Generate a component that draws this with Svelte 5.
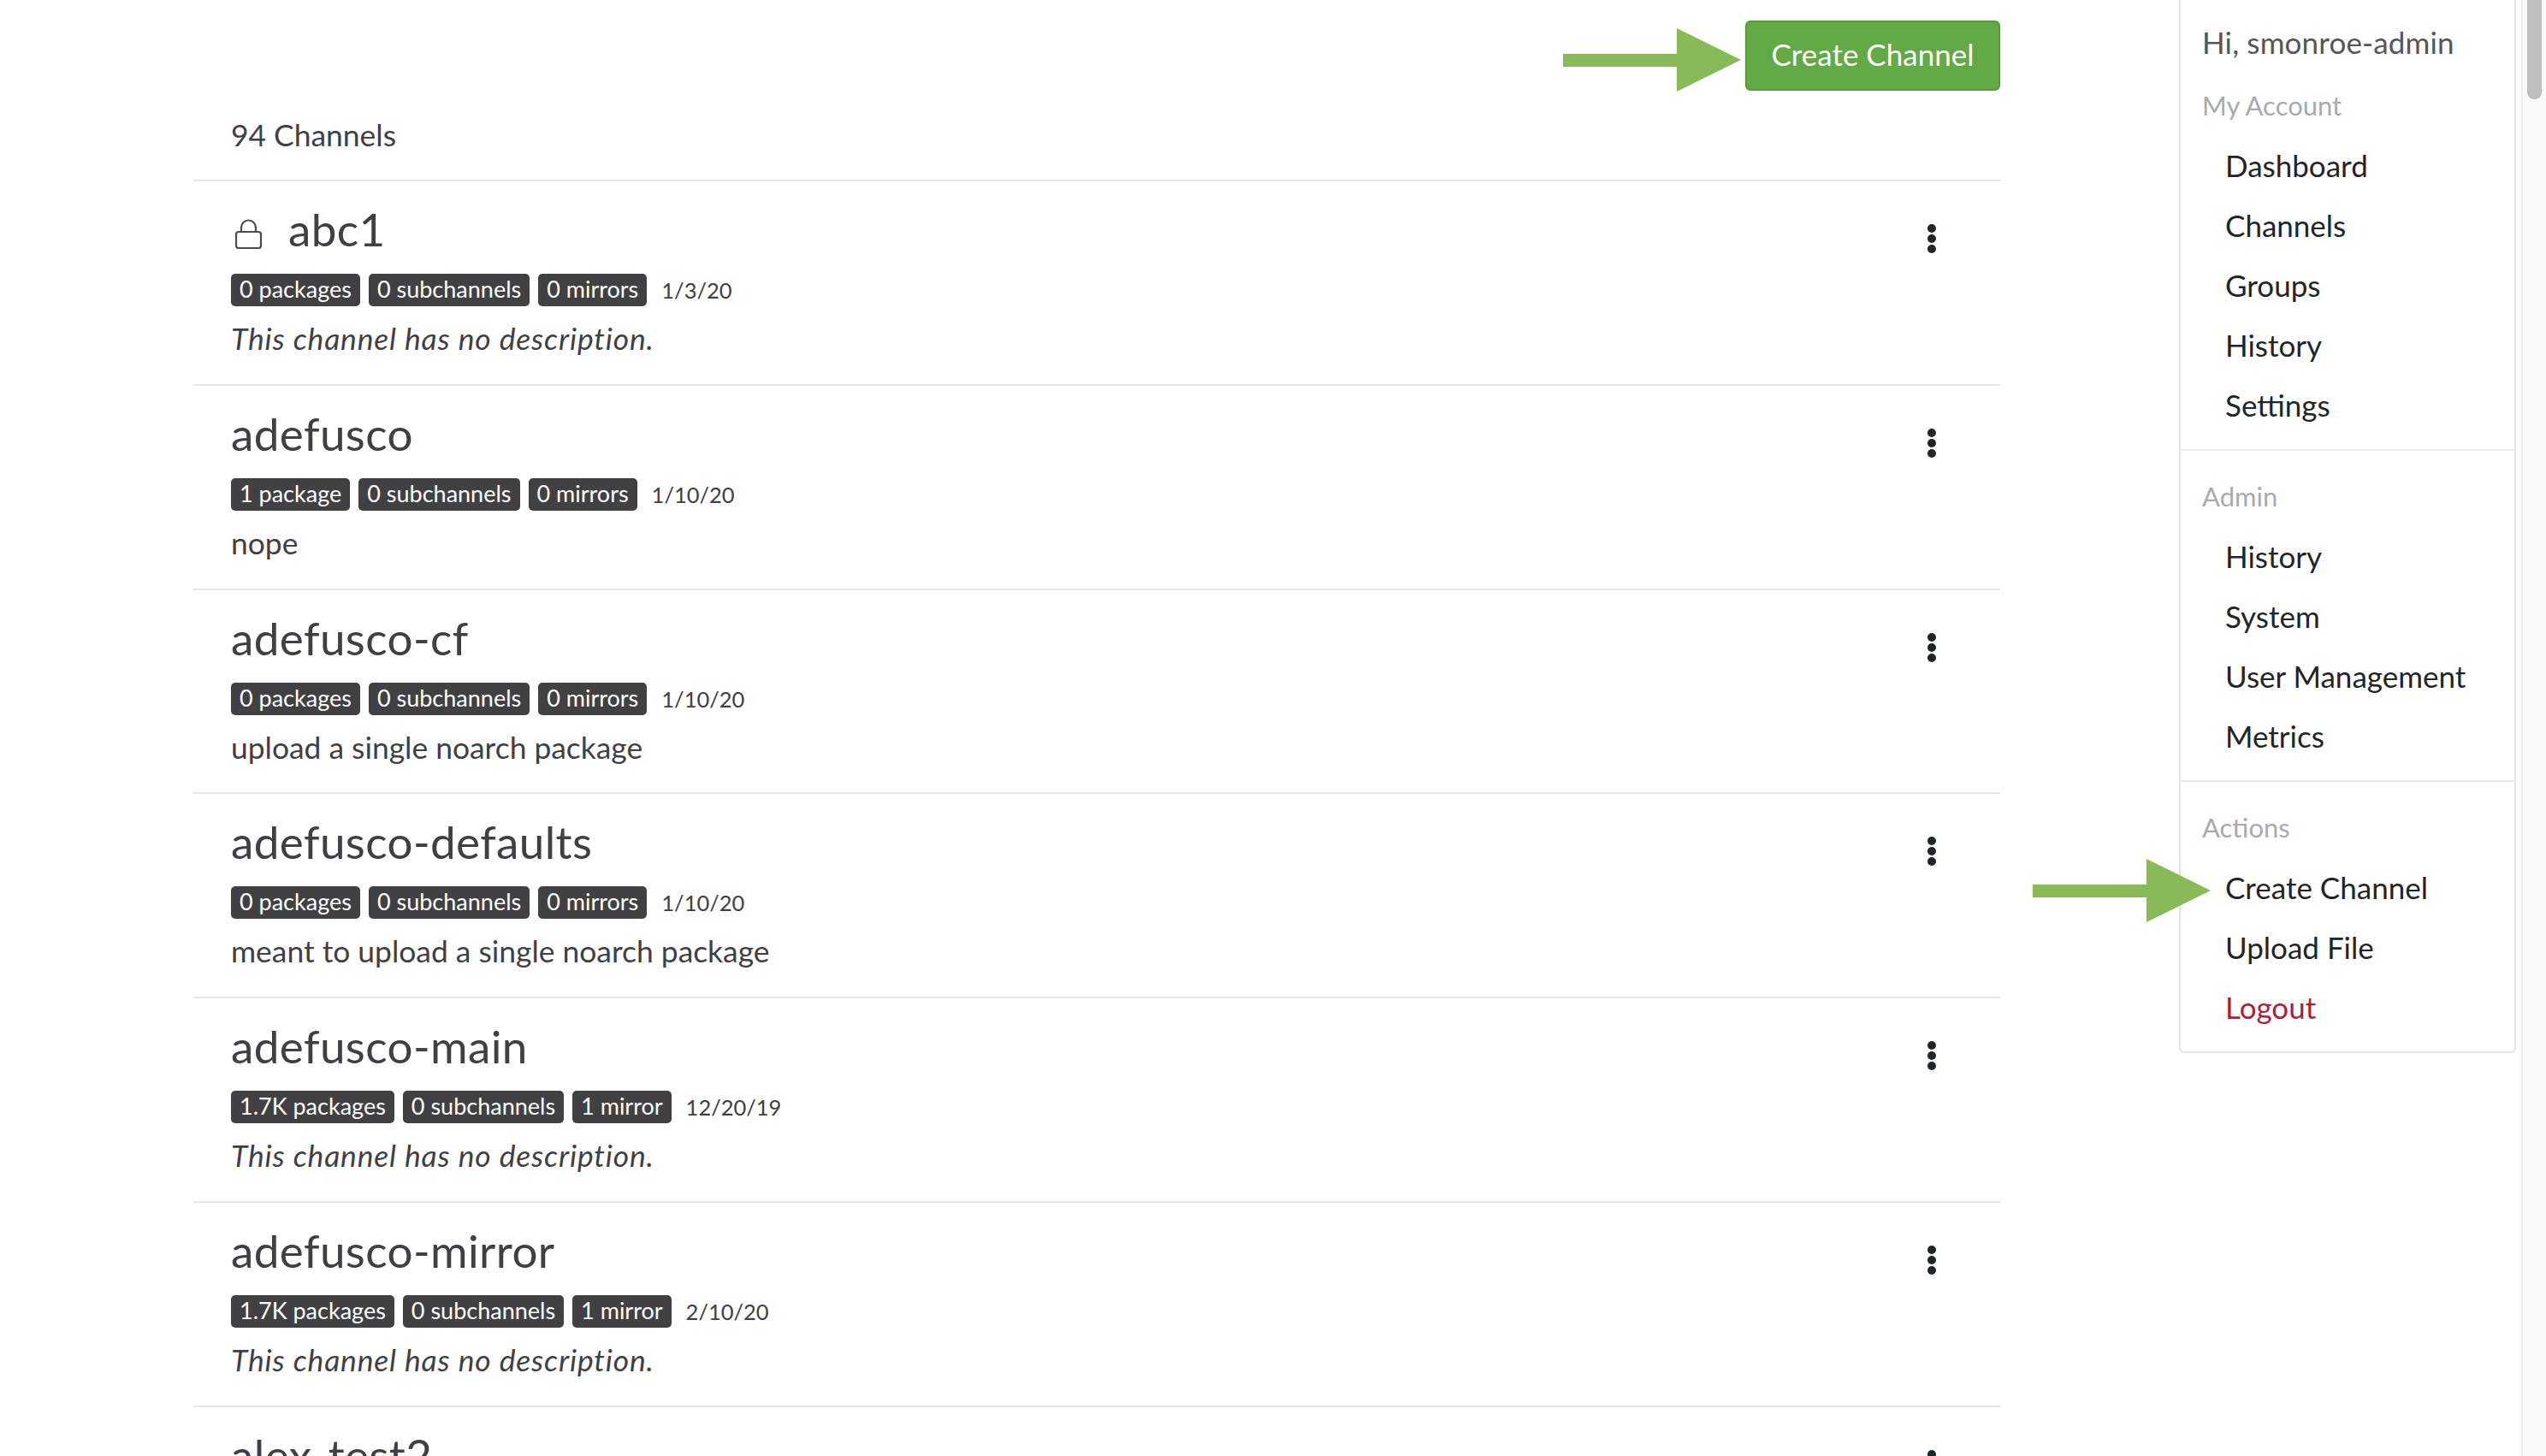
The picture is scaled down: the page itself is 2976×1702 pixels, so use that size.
<script>
  const channels = [
    { name: 'abc1', locked: true, packages: '0 packages', subs: '0 subchannels', mirrors: '0 mirrors', date: '1/3/20', desc: '' },
    { name: 'adefusco', packages: '1 package', subs: '0 subchannels', mirrors: '0 mirrors', date: '1/10/20', desc: 'nope' },
    { name: 'adefusco-cf', packages: '0 packages', subs: '0 subchannels', mirrors: '0 mirrors', date: '1/10/20', desc: 'upload a single noarch package' },
    { name: 'adefusco-defaults', packages: '0 packages', subs: '0 subchannels', mirrors: '0 mirrors', date: '1/10/20', desc: 'meant to upload a single noarch package' },
    { name: 'adefusco-main', packages: '1.7K packages', subs: '0 subchannels', mirrors: '1 mirror', date: '12/20/19', desc: '' },
    { name: 'adefusco-mirror', packages: '1.7K packages', subs: '0 subchannels', mirrors: '1 mirror', date: '2/10/20', desc: '' },
    { name: 'alex-test2', packages: '0 packages', subs: '0 subchannels', mirrors: '0 mirrors', date: '1/10/20', desc: '' },
  ];

  const account = ['Dashboard', 'Channels', 'Groups', 'History', 'Settings'];
  const admin = ['History', 'System', 'User Management', 'Metrics'];
</script>

<div class="page">
  <main class="content">
    <div class="toolbar">
      <button class="create-btn">Create Channel</button>
      <svg class="arrow arrow-top" viewBox="0 0 208 74" aria-hidden="true">
        <polygon points="0,30 133,30 133,0 208,37 133,74 133,45 0,45" />
      </svg>
    </div>
    <div class="count">94 Channels</div>

    {#each channels as channel}
      <section class="channel">
        <div class="channel-body">
          <h2 class="title">
            {#if channel.locked}
              <svg class="lock" viewBox="0 0 31 35" fill="none" stroke="currentColor" stroke-width="2.2" aria-hidden="true">
                <path d="M7 15V10a8.5 8.5 0 0 1 17 0v5" />
                <rect x="1" y="15" width="29" height="19" rx="3" />
              </svg>
            {/if}
            {channel.name}
          </h2>
          <div class="meta">
            <span class="badge">{channel.packages}</span>
            <span class="badge">{channel.subs}</span>
            <span class="badge">{channel.mirrors}</span>
            <span class="date">{channel.date}</span>
          </div>
          {#if channel.desc}
            <p class="desc">{channel.desc}</p>
          {:else}
            <p class="desc"><em>This channel has no description.</em></p>
          {/if}
        </div>
        <button class="more" aria-label="More options">
          <i></i><i></i><i></i>
        </button>
      </section>
    {/each}
  </main>

  <aside class="sidebar">
    <div class="card">
      <div class="group">
        <div class="hello">Hi, smonroe-admin</div>
        <div class="heading first">My Account</div>
        {#each account as item}
          <a class="item" href="#top">{item}</a>
        {/each}
      </div>
      <div class="group">
        <div class="heading">Admin</div>
        {#each admin as item}
          <a class="item" href="#top">{item}</a>
        {/each}
      </div>
      <div class="group last">
        <div class="heading">Actions</div>
        <a class="item" href="#top">Create Channel</a>
        <a class="item" href="#top">Upload File</a>
        <a class="item logout" href="#top">Logout</a>
      </div>
      <svg class="arrow arrow-side" viewBox="0 0 208 74" aria-hidden="true">
        <polygon points="0,30 133,30 133,0 208,37 133,74 133,45 0,45" />
      </svg>
    </div>
  </aside>

  <div class="scrollbar"><div class="thumb"></div></div>
</div>

<style>
  :global(body) {
    margin: 0;
    background: #fff;
  }

  .page {
    display: flex;
    height: 1702px;
    overflow: hidden;
    font-family: Lato, "Open Sans", sans-serif;
    color: #3f4045;
  }

  .content {
    width: 2112px;
    margin-left: 226px;
    flex-shrink: 0;
  }

  .toolbar {
    position: relative;
    display: flex;
    justify-content: flex-end;
    padding-top: 24px;
    height: 82px;
  }

  .create-btn {
    width: 298px;
    height: 82px;
    background: #62aa45;
    border: 2px solid #55993a;
    border-radius: 6px;
    color: #fff;
    font: inherit;
    font-size: 35px;
    padding: 0 0 4px;
  }

  .arrow {
    position: absolute;
    width: 208px;
    height: 74px;
  }

  .arrow polygon {
    fill: #88ba57;
  }

  .arrow-top {
    left: 1601px;
    top: 33px;
  }

  .count {
    padding: 30px 0 0 44px;
    height: 74px;
    font-size: 35.4px;
    line-height: 44px;
  }

  .channel {
    display: flex;
    justify-content: space-between;
    height: 238.75px;
    box-sizing: border-box;
    border-top: 2px solid #e6e6e6;
    padding: 0 75px 0 44px;
  }

  .title {
    display: flex;
    align-items: center;
    margin: 25px 0 0;
    height: 62px;
    font-size: 53px;
    font-weight: 400;
    line-height: 62px;
    color: #3f4045;
    letter-spacing: 0.4px;
  }

  .lock {
    width: 31px;
    height: 35px;
    margin: 11px 31px 0 5px;
    color: #4a4b50;
  }

  .meta {
    display: flex;
    align-items: center;
    gap: 10px;
    margin-top: 21px;
    height: 38px;
  }

  .badge {
    height: 38px;
    padding: 0 10px;
    line-height: 36px;
    background: #414144;
    color: #fff;
    border-radius: 5px;
    font-size: 27px;
    white-space: nowrap;
  }

  .date {
    margin-left: 7px;
    font-size: 25.5px;
  }

  .desc {
    margin: 16px 0 0;
    font-size: 35.4px;
    line-height: 44px;
  }

  .desc em {
    letter-spacing: 0.85px;
  }

  .more {
    display: flex;
    flex-direction: column;
    gap: 2px;
    border: 0;
    background: none;
    padding: 0;
    margin-top: 50px;
    height: 34px;
    width: 10px;
  }

  .more i {
    width: 10px;
    height: 10px;
    border-radius: 50%;
    background: #212529;
  }

  .sidebar {
    margin-left: 209px;
    width: 394px;
    flex-shrink: 0;
  }

  .card {
    position: relative;
    box-sizing: border-box;
    width: 394px;
    height: 1231px;
    border: 2px solid #e2e3e5;
    border-top: 0;
    border-radius: 0 0 6px 6px;
    font-size: 35px;
  }

  .group {
    border-bottom: 2px solid #e9ecef;
    padding: 0 0 17px;
  }

  .group.last {
    border-bottom: 0;
  }

  .hello {
    padding: 27px 0 0 25px;
    line-height: 44px;
    color: #55565a;
    letter-spacing: 0.15px;
  }

  .heading {
    padding: 31px 0 0 25px;
    margin-bottom: 13px;
    height: 44px;
    line-height: 44px;
    font-size: 31px;
    color: #a9aaae;
  }

  .heading.first {
    padding-top: 30px;
    margin-bottom: 13px;
  }

  .item {
    display: block;
    padding-left: 52px;
    height: 70px;
    line-height: 70px;
    color: #212529;
    text-decoration: none;
    white-space: nowrap;
  }

  .logout {
    color: #ae1f36;
  }

  .arrow-side {
    left: -173px;
    top: 1004px;
  }

  .scrollbar {
    position: absolute;
    right: 0;
    top: 0;
    box-sizing: border-box;
    width: 29px;
    height: 1702px;
    background: #f9f9f9;
    border-left: 2px solid #ececec;
    padding: 0 5px;
  }

  .thumb {
    height: 116px;
    background: #bfbfbf;
    border-radius: 0 0 8px 8px;
  }
</style>
